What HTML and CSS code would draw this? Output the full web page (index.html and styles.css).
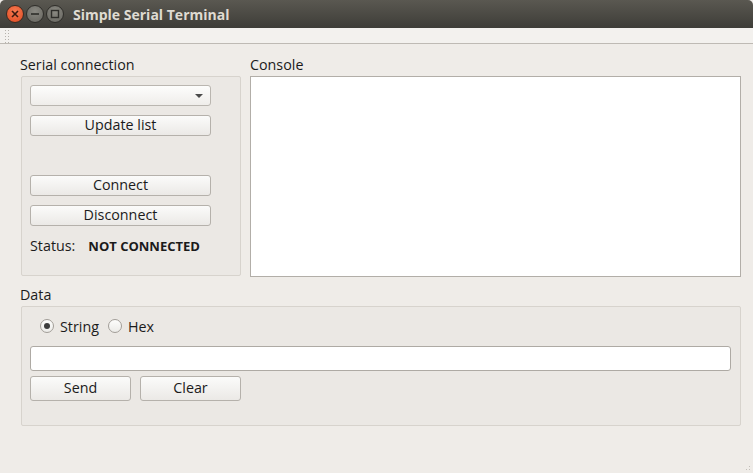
FILE: index.html
```html
<!DOCTYPE html>
<html>
<head>
<meta charset="utf-8">
<link rel="stylesheet" href="styles.css">
</head>
<body>
<div class="window">
  <div class="titlebar">
    <div class="wbtns">
      <span class="wbtn close"><svg width="8" height="8" viewBox="0 0 8 8"><path d="M1 1L7 7M7 1L1 7" stroke="#3a1a10" stroke-width="1.6"/></svg></span>
      <span class="wbtn mini"><svg width="10" height="8" viewBox="0 0 10 8"><path d="M1 4H9" stroke="#2e2d2a" stroke-width="1.6"/></svg></span>
      <span class="wbtn maxi"><svg width="10" height="10" viewBox="0 0 10 10"><rect x="1.5" y="1.5" width="7" height="7" fill="none" stroke="#2e2d2a" stroke-width="1.4"/></svg></span>
    </div>
    <div class="title">Simple Serial Terminal</div>
  </div>
  <div class="toolbar"><span class="handle"></span></div>
  <div class="content">
    <div class="top">
      <div class="col">
        <div class="label">Serial connection</div>
        <div class="group serial">
          <div class="combo"><span class="arrow"></span></div>
          <div class="btn wide">Update list</div>
          <div class="btn wide connect">Connect</div>
          <div class="btn wide">Disconnect</div>
          <div class="status"><span>Status:</span><b>NOT CONNECTED</b></div>
        </div>
      </div>
      <div class="col">
        <div class="label">Console</div>
        <div class="console"></div>
      </div>
    </div>
    <div class="label data-label">Data</div>
    <div class="group data">
      <div class="radios">
        <span class="radio on"></span><span class="rlabel">String</span>
        <span class="radio"></span><span class="rlabel">Hex</span>
      </div>
      <div class="input"></div>
      <div class="btnrow">
        <div class="btn small">Send</div>
        <div class="btn small">Clear</div>
      </div>
    </div>
  </div>
  <span class="grip"></span>
</div>
</body>
</html>
```

FILE: styles.css
```css
* { box-sizing: border-box; }
html, body { margin: 0; padding: 0; }
body {
  width: 753px;
  height: 473px;
  overflow: hidden;
  background: #efece8;
  font-family: "Open Sans", "DejaVu Sans", sans-serif;
  font-size: 14.3px;
  color: #1b1b1b;
}
.window { position: relative; width: 753px; height: 473px; }
.titlebar {
  height: 28px;
  background: linear-gradient(#5a5851, #3e3d38);
  display: flex;
  align-items: center;
  border-radius: 5px 5px 0 0;
}
.wbtns { display: flex; gap: 2px; padding-left: 6px; align-items: center; }
.wbtn {
  width: 18px; height: 18px; border-radius: 50%;
  display: flex; align-items: center; justify-content: center;
  border: 1px solid #2f2e2a;
}
.close { background: radial-gradient(circle at 50% 35%, #f77a51, #df4a21); border-color: #3b2a22; }
.mini, .maxi { background: radial-gradient(circle at 50% 35%, #8a8982, #65645e); }
.title {
  margin-left: 9px;
  color: #dfdbd2;
  font-weight: bold;
  font-size: 14px;
  letter-spacing: 0;
}
.toolbar {
  height: 16px;
  background: #f3f1ee;
  border-bottom: 1px solid #bebab4;
  display: flex;
  padding-left: 4px;
}
.handle {
  width: 5px; margin-top: 1px; height: 14px;
  background-image: radial-gradient(circle, #b6b2ab 0.8px, transparent 1px);
  background-size: 3px 3px;
}
.content { padding: 13px 12px 0 20px; }
.top { display: grid; grid-template-columns: 221px 1fr; column-gap: 9px; }
.col { display: flex; flex-direction: column; }
.label { height: 19px; line-height: 15px; white-space: nowrap; }
.group {
  border: 1px solid #d7d3cd;
  border-radius: 2px;
  background: #ebe8e4;
  margin-left: 1px;
}
.serial {
  height: 200px;
  padding: 8px 0 0 8px;
  display: flex; flex-direction: column;
}
.combo {
  width: 181px; height: 21px;
  border: 1px solid #bab6b0;
  border-radius: 3px;
  background: linear-gradient(#fdfdfc, #efedea);
  position: relative;
  display: flex; justify-content: flex-end; align-items: center;
  padding-right: 7px;
}
.arrow {
  width: 0; height: 0;
  border-left: 4px solid transparent;
  border-right: 4px solid transparent;
  border-top: 4px solid #4a4a4a;
}
.btn {
  height: 21px;
  border: 1px solid #b5b1ab;
  border-radius: 3px;
  background: linear-gradient(#fbfbfa, #ebe9e6);
  display: flex; align-items: center; justify-content: center;
  line-height: 1;
}
.wide { width: 181px; margin-top: 9px; }
.connect { margin-top: 39px; }
.status {
  margin-top: 10px;
  display: flex; align-items: center;
  height: 19px;
}
.status b { margin-left: 13px; font-size: 13px; }
.console {
  height: 201px;
  background: #fff;
  border: 1px solid #b2aea8;
}
.data-label { margin-top: 10px; height: 19px; line-height: 15px; }
.data {
  height: 120px;
  margin-right: 0;
  padding: 10px 9px 0 8px;
}
.radios { display: flex; align-items: center; height: 18px; padding-left: 10px; }
.radio {
  width: 14px; height: 14px; border-radius: 50%;
  border: 1px solid #a29e98;
  background: linear-gradient(#fdfdfc, #ecebe8);
  display: flex; align-items: center; justify-content: center;
}
.radio.on::after {
  content: ""; width: 6px; height: 6px; border-radius: 50%; background: #3d3d3d;
}
.rlabel { margin-left: 6px; margin-right: 9px; }
.input {
  margin-top: 11px;
  height: 25px;
  background: #fff;
  border: 1px solid #aeaaa4;
  border-radius: 3px;
}
.btnrow { display: flex; gap: 9px; margin-top: 5px; }
.small { width: 101px; height: 25px; }
.grip {
  position: absolute; right: 1px; bottom: 1px;
  width: 10px; height: 10px;
  background-image: radial-gradient(circle, #c3bfb9 0.8px, transparent 1px);
  background-size: 3px 3px;
  clip-path: polygon(100% 0, 100% 100%, 0 100%);
}
```
